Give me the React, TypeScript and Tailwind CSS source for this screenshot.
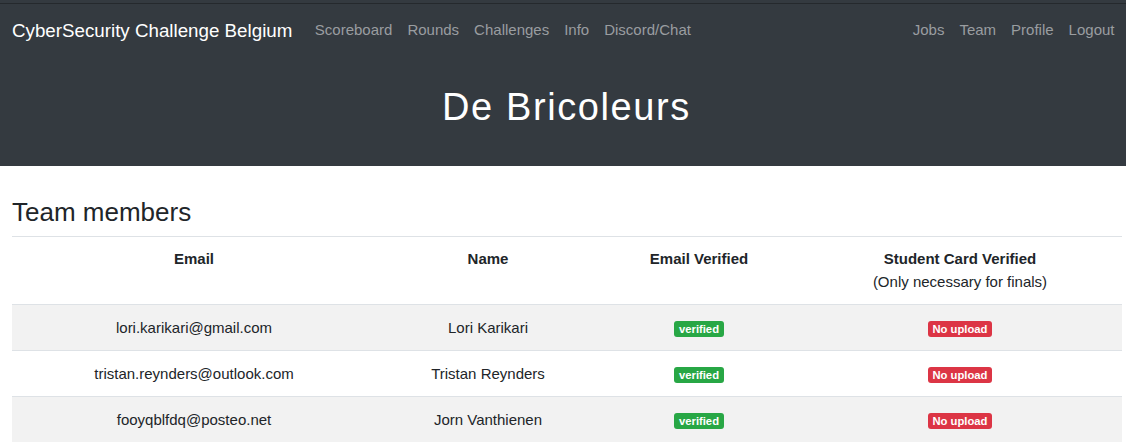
import React from 'react';

const leftLinks = ['Scoreboard', 'Rounds', 'Challenges', 'Info', 'Discord/Chat'];
const rightLinks = ['Jobs', 'Team', 'Profile', 'Logout'];

const members = [
  { email: 'lori.karikari@gmail.com', name: 'Lori Karikari' },
  { email: 'tristan.reynders@outlook.com', name: 'Tristan Reynders' },
  { email: 'fooyqblfdq@posteo.net', name: 'Jorn Vanthienen' },
];

function Badge({ color, children }: { color: 'green' | 'red'; children: React.ReactNode }) {
  const bg = color === 'green' ? 'bg-[#28a745]' : 'bg-[#dc3545]';
  return (
    <span className={`inline-block rounded-[3px] px-[4.5px] py-[2px] align-middle text-[11.25px] font-bold leading-[12px] text-white ${bg}`}>
      {children}
    </span>
  );
}

export default function App() {
  return (
    <div className="min-h-[442px] bg-white text-[15px] text-[#212529] [font-family:'Liberation_Sans',Arial,sans-serif]">
      {/* Kopbalk + titel */}
      <div className="bg-[#343a40]">
        <div className="h-[3px]" />
        <div className="h-px bg-[#25292d]" />
        <nav className="flex h-[52px] items-center pl-[12px] pr-[4px]">
          <a className="mr-[15px] text-[18.75px] leading-[27px] text-white">CyberSecurity Challenge Belgium</a>
          <div className="flex">
            {leftLinks.map((l) => (
              <a key={l} className="px-[7.5px] leading-[22px] text-[#9a9da0]">{l}</a>
            ))}
          </div>
          <div className="ml-auto flex">
            {rightLinks.map((l) => (
              <a key={l} className="px-[7.5px] leading-[22px] text-[#9a9da0]">{l}</a>
            ))}
          </div>
        </nav>
        <div className="flex h-[110px] items-start justify-center pt-[26px] pl-[7px]">
          <h1 className="text-[38px] font-light leading-[50px] tracking-[1.6px] text-white">De Bricoleurs</h1>
        </div>
      </div>

      {/* Teamleden */}
      <div className="pl-[12px] pr-[4px] pt-[31px]">
        <h2 className="mb-[8px] text-[26px] leading-[31px]">Team members</h2>
        <table className="w-full border-collapse">
          <colgroup>
            <col className="w-[364px]" />
            <col className="w-[224px]" />
            <col className="w-[198px]" />
            <col />
          </colgroup>
          <thead>
            <tr className="border-t border-b border-[#dee2e6]">
              <th className="px-3 pt-[10px] pb-[11px] align-top font-bold leading-[23px]">Email</th>
              <th className="px-3 pt-[10px] pb-[11px] align-top font-bold leading-[23px]">Name</th>
              <th className="px-3 pt-[10px] pb-[11px] align-top font-bold leading-[23px]">Email Verified</th>
              <th className="px-3 pt-[10px] pb-[11px] align-top leading-[23px]">
                <span className="font-bold">Student Card Verified</span>
                <br />
                <span className="font-normal">(Only necessary for finals)</span>
              </th>
            </tr>
          </thead>
          <tbody>
            {members.map((m, i) => (
              <tr key={m.email} className={`border-t border-[#dee2e6] ${i % 2 === 0 ? 'bg-[#f2f2f2]' : 'bg-white'}`}>
                <td className="h-[46px] px-3 py-0 text-center leading-[20px]">{m.email}</td>
                <td className="h-[46px] px-3 py-0 text-center leading-[20px]">{m.name}</td>
                <td className="h-[46px] px-3 py-0 text-center leading-[20px]">
                  <Badge color="green">verified</Badge>
                </td>
                <td className="h-[46px] px-3 py-0 text-center leading-[20px]">
                  <Badge color="red">No upload</Badge>
                </td>
              </tr>
            ))}
          </tbody>
        </table>
      </div>
    </div>
  );
}
